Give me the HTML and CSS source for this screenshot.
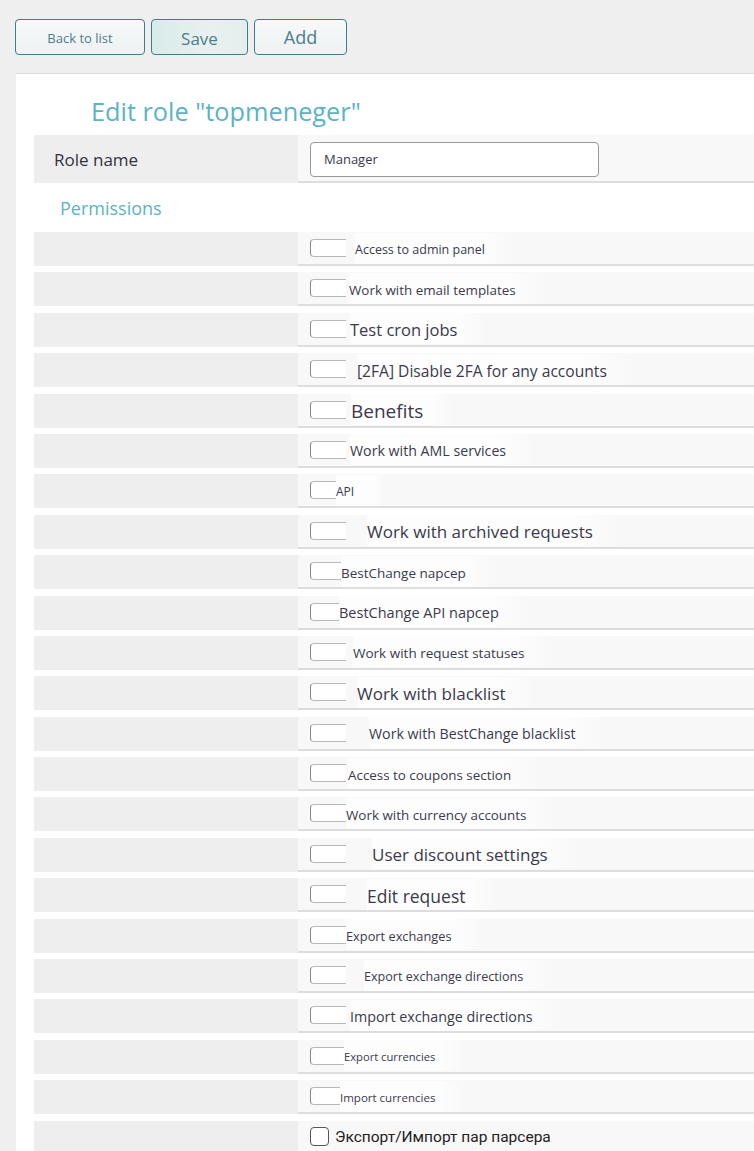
FILE: index.html
```html
<!DOCTYPE html>
<html lang="en">
<head>
<meta charset="utf-8">
<title>Edit role</title>
<link rel="stylesheet" href="styles.css">
</head>
<body>
<div class="toolbar">
  <button class="btn btn-back">Back to list</button>
  <button class="btn btn-save">Save</button>
  <button class="btn btn-add">Add</button>
</div>
<div class="panel">
  <h1 class="title">Edit role "topmeneger"</h1>
  <div class="form">
    <div class="row row-name">
      <div class="cell-left"><span class="name-label">Role name</span></div>
      <div class="cell-right"><div class="input">Manager</div></div>
    </div>
    <div class="section">Permissions</div>
    <div class="perms">
      <div class="row"><div class="cell-left"></div><div class="cell-right"><span class="cb"></span><span class="lbl s125 i9">Access to admin panel</span></div></div>
      <div class="row"><div class="cell-left"></div><div class="cell-right"><span class="cb"></span><span class="lbl s134 i3">Work with email templates</span></div></div>
      <div class="row"><div class="cell-left"></div><div class="cell-right"><span class="cb"></span><span class="lbl s165 i4">Test cron jobs</span></div></div>
      <div class="row"><div class="cell-left"></div><div class="cell-right"><span class="cb"></span><span class="lbl s156 i11">[2FA] Disable 2FA for any accounts</span></div></div>
      <div class="row"><div class="cell-left"></div><div class="cell-right"><span class="cb"></span><span class="lbl s19 i5">Benefits</span></div></div>
      <div class="row"><div class="cell-left"></div><div class="cell-right"><span class="cb"></span><span class="lbl s142 i4">Work with AML services</span></div></div>
      <div class="row"><div class="cell-left"></div><div class="cell-right"><span class="cb"></span><span class="lbl s12 im10">API</span></div></div>
      <div class="row"><div class="cell-left"></div><div class="cell-right"><span class="cb"></span><span class="lbl s17 i21">Work with archived requests</span></div></div>
      <div class="row"><div class="cell-left"></div><div class="cell-right"><span class="cb"></span><span class="lbl s135 im5">BestChange napcep</span></div></div>
      <div class="row"><div class="cell-left"></div><div class="cell-right"><span class="cb"></span><span class="lbl s145 im7">BestChange API napcep</span></div></div>
      <div class="row"><div class="cell-left"></div><div class="cell-right"><span class="cb"></span><span class="lbl s135 i7">Work with request statuses</span></div></div>
      <div class="row"><div class="cell-left"></div><div class="cell-right"><span class="cb"></span><span class="lbl s17 i11">Work with blacklist</span></div></div>
      <div class="row"><div class="cell-left"></div><div class="cell-right"><span class="cb"></span><span class="lbl s142 i23">Work with BestChange blacklist</span></div></div>
      <div class="row"><div class="cell-left"></div><div class="cell-right"><span class="cb"></span><span class="lbl s134 i2">Access to coupons section</span></div></div>
      <div class="row"><div class="cell-left"></div><div class="cell-right"><span class="cb"></span><span class="lbl s134 i0">Work with currency accounts</span></div></div>
      <div class="row"><div class="cell-left"></div><div class="cell-right"><span class="cb"></span><span class="lbl s17 i26">User discount settings</span></div></div>
      <div class="row"><div class="cell-left"></div><div class="cell-right"><span class="cb"></span><span class="lbl s175 i21">Edit request</span></div></div>
      <div class="row"><div class="cell-left"></div><div class="cell-right"><span class="cb"></span><span class="lbl s128 i0">Export exchanges</span></div></div>
      <div class="row"><div class="cell-left"></div><div class="cell-right"><span class="cb"></span><span class="lbl s126 i18">Export exchange directions</span></div></div>
      <div class="row"><div class="cell-left"></div><div class="cell-right"><span class="cb"></span><span class="lbl s143 i4">Import exchange directions</span></div></div>
      <div class="row"><div class="cell-left"></div><div class="cell-right"><span class="cb"></span><span class="lbl s112 im2">Export currencies</span></div></div>
      <div class="row"><div class="cell-left"></div><div class="cell-right"><span class="cb"></span><span class="lbl s115 im6">Import currencies</span></div></div>
      <div class="row"><div class="cell-left"></div><div class="cell-right"><span class="cb-real"></span><span class="lbl-ru">Экспорт/Импорт пар парсера</span></div></div>
    </div>
  </div>
</div>
</body>
</html>
```
FILE: styles.css
```css
html, body {
  margin: 0;
  padding: 0;
  overflow: hidden;
}
body {
  background: #efefef;
  font-family: "Open Sans", "Noto Sans", sans-serif;
  color: #3b3a4a;
  padding: 19px 0 0 15px;
}
.toolbar {
  display: flex;
  gap: 6px;
  height: 36px;
}
.btn {
  font-family: "Open Sans", "Noto Sans", sans-serif;
  height: 36px;
  border: 1px solid #3f7d8c;
  border-radius: 4px;
  background: linear-gradient(#f7f9f9, #eef2f3);
  color: #4d7d8c;
  padding: 0;
  margin: 0;
  cursor: pointer;
}
.btn-back { width: 130px; font-size: 13px; padding-top: 2px; }
.btn-save {
  width: 97px;
  font-size: 17px;
  background: linear-gradient(90deg, #d8ebe9, #e8f1f0 60%, #e4eeee);
  padding-top: 2px;
}
.btn-add { width: 93px; font-size: 18px; }

.panel {
  margin-top: 18px;
  margin-left: 1px;
  background: #fff;
  border-top: 1px solid #dcdcdc;
  padding-left: 18px;
  min-height: 1100px;
}
.title {
  margin: 0;
  height: 61px;
  box-sizing: border-box;
  padding: 20px 0 0 57px;
  font-weight: 400;
  font-size: 25.3px;
  line-height: 34px;
  color: #5ab4c4;
}
.row {
  display: grid;
  grid-template-columns: 264px 1fr;
  height: 34px;
}
.row-name { height: 48px; }
.cell-left {
  background: #eeeeee;
  display: flex;
  align-items: center;
}
.cell-right {
  background: #f8f8f8;
  border-bottom: 2px solid #dddddd;
  display: flex;
  align-items: center;
  padding-left: 12px;
}
.name-label {
  padding-left: 20px;
  font-size: 17px;
  color: #333340;
}
.input {
  width: 289px;
  height: 35px;
  box-sizing: border-box;
  border: 1px solid #999;
  border-radius: 4px;
  background: #fff;
  font-size: 13px;
  line-height: 33px;
  padding-left: 13px;
  color: #3b3a4a;
  margin-top: 2px;
}
.section {
  height: 49px;
  box-sizing: border-box;
  padding: 13px 0 0 26px;
  font-size: 18px;
  line-height: 24px;
  color: #5ab4c4;
}
.perms {
  display: flex;
  flex-direction: column;
  gap: 6.4px;
}
.cb {
  width: 36px;
  height: 18px;
  box-sizing: border-box;
  flex: none;
  border: 1px solid #b8b8b8;
  border-left-color: #888;
  border-right: none;
  border-radius: 4px 0 0 4px;
  background: #fff;
}
.cb-real {
  width: 19px;
  height: 19px;
  box-sizing: border-box;
  flex: none;
  border: 1px solid #555;
  border-radius: 4px;
  background: #fff;
}
.lbl {
  white-space: nowrap;
  padding-right: 30px;
  padding-top: 3px;
  background: linear-gradient(90deg, #fdfdfd 80%, rgba(253,253,253,0));
  line-height: 28px;
}
.lbl-ru {
  font-family: Roboto, "Liberation Sans", Arial, sans-serif;
  font-size: 15.5px;
  color: #222;
  margin-left: 6px;
  padding-top: 1px;
}
.s112 { font-size: 11.2px; }
.s115 { font-size: 11.5px; }
.s12 { font-size: 12px; }
.s125 { font-size: 12.5px; }
.s126 { font-size: 12.6px; }
.s128 { font-size: 12.8px; }
.s134 { font-size: 13.4px; }
.s135 { font-size: 13.5px; }
.s142 { font-size: 14.2px; }
.s143 { font-size: 14.3px; }
.s145 { font-size: 14.5px; }
.s156 { font-size: 15.6px; }
.s165 { font-size: 16.5px; }
.s17 { font-size: 17px; }
.s175 { font-size: 17.5px; }
.s19 { font-size: 19px; }
.im10 { margin-left: -10px; }
.im7 { margin-left: -7px; }
.im6 { margin-left: -6px; }
.im5 { margin-left: -5px; }
.im2 { margin-left: -2px; }
.i0 { margin-left: 0; }
.i2 { margin-left: 2px; }
.i3 { margin-left: 3px; }
.i4 { margin-left: 4px; }
.i5 { margin-left: 5px; }
.i7 { margin-left: 7px; }
.i9 { margin-left: 9px; }
.i11 { margin-left: 11px; }
.i18 { margin-left: 18px; }
.i21 { margin-left: 21px; }
.i23 { margin-left: 23px; }
.i26 { margin-left: 26px; }
```
